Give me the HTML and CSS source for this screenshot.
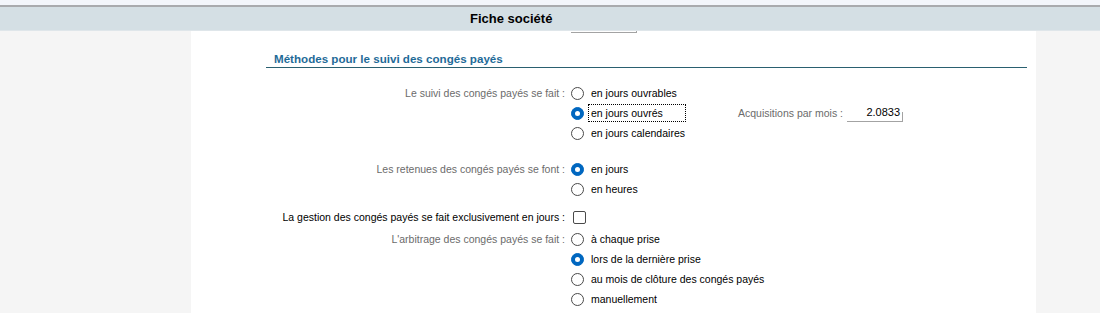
FILE: index.html
```html
<!DOCTYPE html>
<html lang="fr">
<head>
<meta charset="utf-8">
<title>Fiche société</title>
<link rel="stylesheet" href="styles.css">
</head>
<body>
<div class="topstrip"></div>
<div class="titlebar"><span class="title">Fiche société</span></div>
<div class="panel">
  <div class="cutinput"></div>
  <div class="section"><span class="section-title">Méthodes pour le suivi des congés payés</span></div>

  <div class="group g1">
    <div class="row">
      <div class="lbl">Le suivi des congés payés se fait :</div>
      <div class="opt"><span class="radio"></span><span class="otext">en jours ouvrables</span></div>
    </div>
    <div class="row">
      <div class="lbl"></div>
      <div class="opt fixed"><span class="radio on"></span><span class="otext focus">en jours ouvrés</span></div>
      <div class="acq">
        <span class="acq-lbl">Acquisitions par mois :</span>
        <span class="numbox">2.0833</span>
      </div>
    </div>
    <div class="row">
      <div class="lbl"></div>
      <div class="opt"><span class="radio"></span><span class="otext">en jours calendaires</span></div>
    </div>
  </div>

  <div class="group g2">
    <div class="row">
      <div class="lbl">Les retenues des congés payés se font :</div>
      <div class="opt"><span class="radio on"></span><span class="otext">en jours</span></div>
    </div>
    <div class="row">
      <div class="lbl"></div>
      <div class="opt"><span class="radio"></span><span class="otext">en heures</span></div>
    </div>
  </div>

  <div class="group g3">
    <div class="row">
      <div class="lbl dark">La gestion des congés payés se fait exclusivement en jours :</div>
      <div class="opt"><span class="check"></span></div>
    </div>
  </div>

  <div class="group g4">
    <div class="row">
      <div class="lbl">L'arbitrage des congés payés se fait :</div>
      <div class="opt"><span class="radio"></span><span class="otext">à chaque prise</span></div>
    </div>
    <div class="row">
      <div class="lbl"></div>
      <div class="opt"><span class="radio on"></span><span class="otext">lors de la dernière prise</span></div>
    </div>
    <div class="row">
      <div class="lbl"></div>
      <div class="opt"><span class="radio"></span><span class="otext">au mois de clôture des congés payés</span></div>
    </div>
    <div class="row">
      <div class="lbl"></div>
      <div class="opt"><span class="radio"></span><span class="otext">manuellement</span></div>
    </div>
  </div>
</div>
</body>
</html>
```

FILE: styles.css
```css
html, body {
  margin: 0;
  padding: 0;
}
body {
  background: #f5f5f5;
  font-family: "Liberation Sans", Arial, sans-serif;
  font-size: 10.5px;
  color: #000;
  overflow: hidden;
  height: 313px;
}
.topstrip {
  height: 5px;
  background: #f3f6fb;
  border-bottom: 2px solid #a9abae;
}
.titlebar {
  height: 23px;
  background: #d4dfe4;
  border-bottom: 1px solid #dfe6ea;
  display: flex;
  align-items: center;
  padding-left: 470px;
}
.title {
  font-weight: bold;
  font-size: 13px;
  color: #000;
}
.panel {
  margin-left: 191px;
  width: 845px;
  height: 282px;
  background: #fff;
}
.cutinput {
  margin-left: 380px;
  width: 65px;
  height: 1px;
  border-bottom: 1px solid #a3a3a3;
  border-right: 1px solid #a3a3a3;
}
.section {
  margin-left: 75px;
  width: 753px;
  margin-top: 19px;
  padding-left: 8px;
  height: 15px;
  border-bottom: 1px solid #2a6070;
}
.section-title {
  font-weight: bold;
  font-size: 11.6px;
  line-height: 14px;
  color: #1f6b98;
}
.group.g1 { margin-top: 15px; }
.group.g2 { margin-top: 16px; }
.group.g3 { margin-top: 8px; }
.group.g4 { margin-top: 2px; }
.row {
  display: flex;
  align-items: center;
  height: 20px;
}
.lbl {
  width: 374px;
  margin-right: 5px;
  text-align: right;
  color: #6b6b6b;
  white-space: nowrap;
}
.lbl.dark { color: #000; }
.opt {
  display: flex;
  align-items: center;
  white-space: nowrap;
}
.opt.fixed { width: 168px; }
.radio {
  width: 11px;
  height: 11px;
  border: 1px solid #4a4a4a;
  border-radius: 50%;
  background: #fff;
  margin-left: 1px;
  margin-right: 7px;
  position: relative;
  flex: none;
}
.radio.on {
  background: #0067c0;
  border-color: #0067c0;
}
.radio.on::after {
  content: "";
  position: absolute;
  left: 3px;
  top: 3px;
  width: 5px;
  height: 5px;
  border-radius: 50%;
  background: #fff;
}
.otext {
  color: #000;
  line-height: 16px;
  border: 1px solid transparent;
  padding: 0 2px;
  margin-left: -3px;
}
.otext.focus {
  border: 1px dotted #000;
  width: 92px;
}
.check {
  width: 11px;
  height: 11px;
  border: 1px solid #4a4a4a;
  border-radius: 2px;
  background: #fff;
  margin-left: 3px;
}
.acq {
  display: flex;
  align-items: center;
}
.acq-lbl {
  color: #6b6b6b;
  margin-right: 4px;
}
.numbox {
  position: relative;
  width: 53px;
  height: 17px;
  line-height: 17px;
  text-align: right;
  padding-right: 3px;
  border-bottom: 1px solid #a3a3a3;
  color: #000;
  font-size: 11px;
}
.numbox::after {
  content: "";
  position: absolute;
  right: 0;
  bottom: 0;
  width: 1px;
  height: 9px;
  background: #a3a3a3;
}
```
